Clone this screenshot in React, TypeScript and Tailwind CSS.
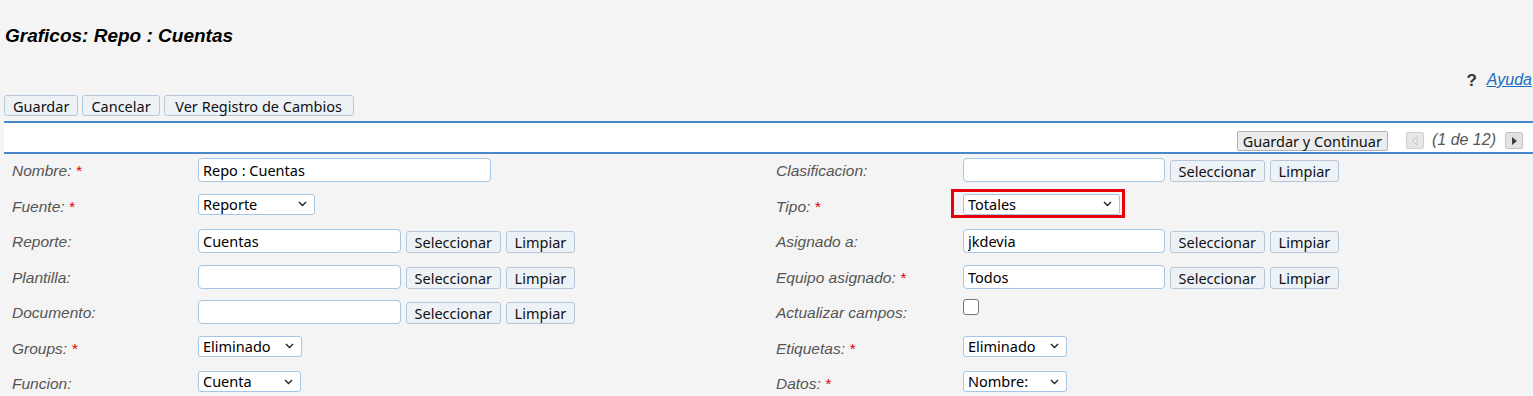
import React from "react";

const sans = "font-['Liberation_Sans',Arial,sans-serif]";
const ui = "font-['Noto_Sans',sans-serif]";

function Btn({ children, className = "" }: { children: React.ReactNode; className?: string }) {
  return (
    <button
      className={`h-[22px] shrink-0 px-[8px] border border-[#b4c6d8] bg-[#edf2f6] rounded-[3px] text-[14.5px] leading-[18px] text-[#111] ${ui} ${className}`}
    >
      {children}
    </button>
  );
}

function Label({ text, req }: { text: string; req?: boolean }) {
  return (
    <div className={`pl-[8px] pt-[8px] text-[15.5px] leading-[18px] italic text-[#555] whitespace-nowrap ${sans}`}>
      {text}
      {req && <span className="ml-[4px] text-[#e00000]">*</span>}
    </div>
  );
}

function TextInput({ value = "", w }: { value?: string; w: string }) {
  return (
    <input
      type="text"
      defaultValue={value}
      className={`${w} h-[24px] shrink-0 rounded-[4px] border border-[#a3c5e6] bg-white pl-[4px] text-[14.5px] text-black outline-none ${ui}`}
    />
  );
}

function Select({ value, w }: { value: string; w: string }) {
  return (
    <div
      className={`${w} h-[21px] flex items-center justify-between rounded-[3px] border border-[#a3c5e6] bg-white pl-[4px] pr-[7px] text-[14.5px] leading-[19px] text-black ${ui}`}
    >
      <span>{value}</span>
      <svg width="9" height="6" viewBox="0 0 9 6" className="shrink-0">
        <path d="M1 1 L4.5 4.5 L8 1" fill="none" stroke="#222" strokeWidth="1.4" />
      </svg>
    </div>
  );
}

function Picker({ value = "", w = "w-[203px]" }: { value?: string; w?: string }) {
  return (
    <div className="flex items-start gap-[4.5px]">
      <TextInput value={value} w={w} />
      <Btn className="mt-[2px]">Seleccionar</Btn>
      <Btn className="mt-[2px]">Limpiar</Btn>
    </div>
  );
}

function Field({ children }: { children: React.ReactNode }) {
  return <div className="pt-[4px]">{children}</div>;
}

export default function App() {
  const rows: [React.ReactNode, React.ReactNode, React.ReactNode, React.ReactNode][] = [
    [
      <Label text="Nombre:" req />,
      <TextInput value="Repo : Cuentas" w="w-[293px]" />,
      <Label text="Clasificacion:" />,
      <Picker w="w-[202px]" />,
    ],
    [
      <Label text="Fuente:" req />,
      <Select value="Reporte" w="w-[117px]" />,
      <Label text="Tipo:" req />,
      <div className="flex w-fit -mt-[5px] -ml-[12px] border-[3px] border-[#e8000b] pl-[9px] pr-[2px] pt-[2px]">
        <Select value="Totales" w="w-[157px]" />
      </div>,
    ],
    [
      <Label text="Reporte:" />,
      <Picker value="Cuentas" />,
      <Label text="Asignado a:" />,
      <Picker value="jkdevia" w="w-[202px]" />,
    ],
    [
      <Label text="Plantilla:" />,
      <Picker />,
      <Label text="Equipo asignado:" req />,
      <Picker value="Todos" w="w-[202px]" />,
    ],
    [
      <Label text="Documento:" />,
      <Picker />,
      <Label text="Actualizar campos:" />,
      <div className="w-[16px] h-[16px] -mt-[1px] rounded-[3px] border border-[#767676] bg-white" />,
    ],
    [
      <Label text="Groups:" req />,
      <Select value="Eliminado" w="w-[104px]" />,
      <Label text="Etiquetas:" req />,
      <Select value="Eliminado" w="w-[104px]" />,
    ],
    [
      <Label text="Funcion:" />,
      <Select value="Cuenta" w="w-[103px]" />,
      <Label text="Datos:" req />,
      <Select value="Nombre:" w="w-[104px]" />,
    ],
  ];

  return (
    <div className="min-h-screen bg-[#f4f4f4] pl-[4px] overflow-hidden">
      <h1 className={`pt-[25px] pl-[1px] text-[19px] leading-[22px] font-bold italic text-black ${sans}`}>
        Graficos: Repo : Cuentas
      </h1>

      <div className="mt-[23px] h-[20px] flex justify-end items-end gap-[10px] pr-[1px]">
        <span className={`text-[17px] leading-[18px] font-bold text-[#333] ${sans}`}>?</span>
        <a href="#" className={`text-[16px] leading-[20px] italic underline text-[#1a6dbf] ${sans}`}>
          Ayuda
        </a>
      </div>

      <div className="mt-[5px] flex gap-[4px]">
        <Btn className="!h-[21px]">Guardar</Btn>
        <Btn className="!h-[21px]">Cancelar</Btn>
        <Btn className="!h-[21px] !px-[10px] w-[190px]">Ver Registro de Cambios</Btn>
      </div>

      <div className="mt-[5px] h-[2px] bg-[#4a87c9]" />

      <div className="h-[29px] bg-white flex justify-end items-end pr-[10px]">
        <button
          className={`mb-[1px] h-[20px] px-[5px] border border-[#b0b0b0] bg-[#ececec] rounded-[2px] text-[14.5px] leading-[17px] text-[#111] ${ui}`}
        >
          Guardar y Continuar
        </button>
        <div className="ml-[18px] mb-[3px] w-[18px] h-[17px] flex items-center justify-center border border-[#cfcfcf] bg-[#e6e6e6] rounded-[2px]">
          <svg width="7" height="10" viewBox="0 0 7 10">
            <path d="M6 1 L1.5 5 L6 9 Z" fill="#efefef" stroke="#c4c4c4" strokeWidth="1" />
          </svg>
        </div>
        <span className={`ml-[8px] mb-[2px] text-[16px] leading-[20px] italic text-[#555] ${sans}`}>(1 de 12)</span>
        <div className="ml-[9px] mb-[3px] w-[18px] h-[17px] flex items-center justify-center border border-[#c4c4c4] bg-[#e2e2e2] rounded-[2px]">
          <svg width="7" height="10" viewBox="0 0 7 10">
            <path d="M1 1 L6 5 L1 9 Z" fill="#3d3d3d" />
          </svg>
        </div>
      </div>

      <div className="h-[2px] bg-[#4a87c9]" />

      <div className="grid grid-cols-[194px_570px_195px_1fr]">
        {rows.map((r, i) => (
          <React.Fragment key={i}>
            <div className="h-[35.5px]">{r[0]}</div>
            <Field>{r[1]}</Field>
            <div className="h-[35.5px]">{r[2]}</div>
            <Field>{r[3]}</Field>
          </React.Fragment>
        ))}
      </div>
    </div>
  );
}
